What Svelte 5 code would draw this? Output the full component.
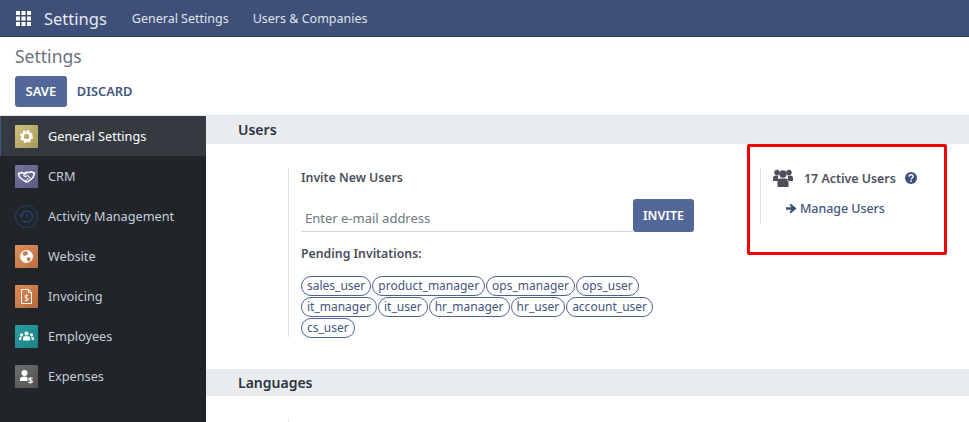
<script>
    const apps = [
        { name: 'General Settings', color: 'linear-gradient(135deg, #cdc07c, #a99b57)', icon: 'gear', active: true },
        { name: 'CRM', color: 'linear-gradient(135deg, #74749c, #5b5b84)', icon: 'shake' },
        { name: 'Activity Management', color: 'transparent', icon: 'clock' },
        { name: 'Website', color: 'linear-gradient(135deg, #e28f5c, #b96f42)', icon: 'globe' },
        { name: 'Invoicing', color: 'linear-gradient(135deg, #e08a55, #b46a3e)', icon: 'doc' },
        { name: 'Employees', color: 'linear-gradient(135deg, #2a9fa2, #1d8083)', icon: 'team' },
        { name: 'Expenses', color: 'linear-gradient(135deg, #6f6f6f, #515151)', icon: 'exp' }
    ];
    const pending = [
        'sales_user', 'product_manager', 'ops_manager', 'ops_user', 'it_manager',
        'it_user', 'hr_manager', 'hr_user', 'account_user', 'cs_user'
    ];
</script>

<div class="page">
    <header class="navbar">
        <svg class="apps" width="15" height="15" viewBox="0 0 15 15" fill="#fff">
            {#each [0, 5.5, 11] as y}
                {#each [0, 5.5, 11] as x}
                    <rect {x} {y} width="4" height="4" />
                {/each}
            {/each}
        </svg>
        <span class="brand">Settings</span>
        <a class="nav-link" href="#a">General Settings</a>
        <a class="nav-link" href="#b">Users &amp; Companies</a>
    </header>

    <div class="control-panel">
        <div class="crumb">Settings</div>
        <div class="buttons">
            <button class="btn primary">SAVE</button>
            <button class="btn link">DISCARD</button>
        </div>
    </div>

    <div class="main">
        <aside class="sidebar">
            {#each apps as app}
                <div class="app" class:active={app.active}>
                    <span class="app-icon" class:round={app.icon === 'clock'} style="background: {app.color}">
                        <svg width="23" height="23" viewBox="0 0 23 23">
                            {#if app.icon === 'gear'}
                                <circle cx="11.5" cy="11.5" r="4" fill="none" stroke="#fff" stroke-width="2.6" />
                                <circle cx="11.5" cy="11.5" r="5.6" fill="none" stroke="#fff" stroke-width="1.8" stroke-dasharray="2.4 2" />
                            {:else if app.icon === 'shake'}
                                <path d="M3.500 8.500l3.500-1 1.500 1 3-1.200 3 .2 1.500-.8 3.500 1.300-1.500 4.500-4.500 4-2.500.5-3-2-3.500-3z" fill="none" stroke="#fff" stroke-width="1.500" stroke-linejoin="round" />
                                <path d="M11.500 8.300l-2.800 2.200 1.500 1.200 2.300-1.100 3 2.700M10 15l1.500 1M12 13.500l1.500 1.300" fill="none" stroke="#fff" stroke-width="1.100" />
                            {:else if app.icon === 'clock'}
                                <circle cx="11.5" cy="11.5" r="11" fill="none" stroke="#24406f" stroke-width="1" />
                                <path d="M6.500 11.500a5.500 5.500 0 1 1 1.600 3.900" fill="none" stroke="#24406f" stroke-width="1.500" />
                                <path d="M4.800 10.500h3.400l-1.700 2.400zM11.500 8.500v3.400l2.400 1.200" fill="#24406f" stroke="#24406f" stroke-width="1" />
                            {:else if app.icon === 'globe'}
                                <circle cx="11.5" cy="11.5" r="6.5" fill="#fff" />
                                <path d="M8 7l4-1 1 3-3 2-2-1zM12 12l4 1-2 4-2-2z" fill="#c67a4c" />
                            {:else if app.icon === 'doc'}
                                <path d="M6.500 4.500h7l3 3v11h-10z" fill="none" stroke="#fff" stroke-width="1" />
                                <path d="M13.500 4.500v3h3" fill="none" stroke="#fff" stroke-width="1" />
                                <text x="11.5" y="16" class="glyph" font-size="8">$</text>
                            {:else if app.icon === 'team'}
                                <g fill="#fff">
                                    <circle cx="11.5" cy="8.500" r="2.100" />
                                    <circle cx="6.500" cy="9.800" r="1.600" />
                                    <circle cx="16.500" cy="9.800" r="1.600" />
                                    <path d="M8 15.500v-2.500q0-2 3.500-2t3.500 2v2.500zM4 15v-2q0-1.400 3-1.600-.6.6-.6 1.800V15zM19 15v-2q0-1.400-3-1.600.6.6.6 1.800V15z" />
                                </g>
                            {:else}
                                <circle cx="9.500" cy="8" r="3" fill="#fff" />
                                <path d="M5 16v-2q0-2.500 4.500-2.500 2 0 3 .7V16z" fill="#fff" />
                                <text x="15.500" y="18.500" class="glyph bold" font-size="9.500">$</text>
                            {/if}
                        </svg>
                    </span>
                    <span class="app-name">{app.name}</span>
                </div>
            {/each}
        </aside>

        <section class="content">
            <h2 class="section-title">Users</h2>
            <div class="settings-row">
                <div class="invite-box">
                    <div class="label">Invite New Users</div>
                    <div class="invite-form">
                        <input class="email" placeholder="Enter e-mail address" />
                        <button class="btn primary invite">INVITE</button>
                    </div>
                    <div class="label pending-label">Pending Invitations:</div>
                    <div class="chips">
                        {#each pending as user}
                            <span class="chip">{user}</span>
                        {/each}
                    </div>
                </div>

                <div class="active-box">
                    <div class="active-line">
                        <svg class="users" width="20" height="18" viewBox="0 0 20 18" fill="#4b505b">
                            <circle cx="4" cy="3.500" r="2.700" />
                            <circle cx="16" cy="3.500" r="2.700" />
                            <circle cx="10" cy="5" r="3.700" />
                            <path d="M0 12V9q0-2.500 3-2.500h2.500q-.5 1-.5 2.500t1 3zM20 12V9q0-2.500-3-2.500h-2.500q.5 1 .5 2.500t-1 3zM4.500 18v-5q0-3.500 3-3.500h5q3 0 3 3.500v5z" />
                        </svg>
                        <span class="active-count">17 Active Users</span>
                        <svg class="help" width="12" height="12" viewBox="0 0 13 13">
                            <circle cx="6.500" cy="6.500" r="6.500" fill="#3d4f80" />
                            <path d="M4.300 5q.2-2 2.300-2t2.200 1.800q0 1-1.100 1.700-.9.500-.9 1.300" fill="none" stroke="#fff" stroke-width="1.500" />
                            <rect x="5.700" y="9" width="1.700" height="1.700" fill="#fff" />
                        </svg>
                    </div>
                    <a class="manage" href="#m">
                        <svg width="11" height="11" viewBox="0 0 11 11" fill="#3f5078">
                            <path d="M0 4.200h5.500L3.500 2.100 4.900.700 10.500 5.500 4.900 10.300 3.500 8.900l2-2.100H0z" />
                        </svg>
                        Manage Users
                    </a>
                </div>
            </div>

            <h2 class="section-title languages">Languages</h2>
            <div class="settings-row stub"><div class="stub-line"></div></div>
        </section>
    </div>

    <div class="highlight"></div>
</div>

<style>
    :global(body) {
        margin: 0;
        overflow: hidden;
        background: #fff;
    }
    .page {
        position: relative;
        width: 969px;
        height: 422px;
        overflow: hidden;
        font-family: "Noto Sans", "Open Sans", sans-serif;
        font-size: 12.700px;
        color: #4c4c4c;
        display: flex;
        flex-direction: column;
    }
    .navbar {
        height: 36px;
        flex: none;
        background: #3f5078;
        border-bottom: 1px solid #2c3854;
        display: flex;
        align-items: center;
        padding-left: 16px;
        color: #fff;
    }
    .apps {
        margin-right: 13px;
    }
    .brand {
        font-size: 16.500px;
        margin-right: 25px;
        color: #e6e9f0;
    }
    .nav-link {
        color: #dfe3ec;
        text-decoration: none;
        font-size: 12.500px;
        margin-right: 24px;
    }
    .control-panel {
        height: 79px;
        flex: none;
        box-sizing: border-box;
        padding: 8px 15px 0;
        border-bottom: 1px solid #dee2e6;
    }
    .crumb {
        font-size: 17.500px;
        line-height: 22px;
        color: #6b7280;
        margin-bottom: 9px;
    }
    .buttons {
        display: flex;
        align-items: center;
    }
    .btn {
        font-family: inherit;
        font-size: 13px;
        font-weight: 600;
        border: none;
        border-radius: 3px;
        padding: 0 10.500px 2px;
        height: 31px;
        cursor: pointer;
    }
    .primary {
        background: #536898;
        color: #fff;
    }
    .link {
        background: none;
        color: #44567f;
        padding-left: 10px;
        font-size: 12.800px;
    }
    .main {
        flex: 1;
        display: flex;
        min-height: 0;
    }
    .sidebar {
        width: 206px;
        flex: none;
        background: #212529;
    }
    .app {
        height: 40px;
        display: flex;
        align-items: center;
        padding-left: 15px;
        color: #c4cdd9;
    }
    .app.active {
        background: #343a40;
        color: #fff;
        box-shadow: inset 1px 0 0 #44567f;
    }
    .app-icon {
        width: 23px;
        height: 23px;
        border-radius: 1px;
        margin-right: 10px;
        flex: none;
        display: block;
    }
    .app-icon.round {
        border-radius: 50%;
    }
    .app-icon svg {
        display: block;
    }
    .glyph {
        fill: #fff;
        text-anchor: middle;
        font-family: "Noto Sans", sans-serif;
    }
    .bold {
        font-weight: 700;
    }
    .content {
        flex: 1;
        min-width: 0;
    }
    .section-title {
        margin: 0;
        height: 28px;
        line-height: 28px;
        background: #e9ecef;
        padding-left: 32px;
        font-size: 14px;
        font-weight: 600;
        color: #2d3340;
    }
    .settings-row {
        display: flex;
        align-items: flex-start;
        padding: 24px 0 0 82px;
        height: 225px;
        box-sizing: border-box;
    }
    .invite-box {
        width: 393px;
        height: 169px;
        border-left: 1px solid #dee2e6;
        padding-left: 12px;
        flex: none;
    }
    .label {
        font-size: 12.300px;
        font-weight: 600;
        line-height: 18px;
        color: #4b505b;
        padding-top: 1px;
    }
    .invite-form {
        display: flex;
        align-items: flex-end;
        margin-top: 12px;
    }
    .email {
        flex: none;
        width: 332px;
        height: 31px;
        box-sizing: border-box;
        border: none;
        border-bottom: 1px solid #ced4da;
        outline: none;
        font-family: inherit;
        font-size: 13px;
        padding: 4px 4px 0;
        color: #6b7280;
    }
    .email::placeholder {
        color: #6f7782;
        opacity: 1;
    }
    .invite {
        width: 61px;
        padding: 0;
        height: 33px;
        font-size: 12.500px;
    }
    .pending-label {
        margin-top: 12px;
    }
    .chips {
        display: flex;
        flex-wrap: wrap;
        gap: 1px;
        margin-top: 13px;
        width: 393px;
    }
    .chip {
        height: 20px;
        line-height: 18px;
        box-sizing: border-box;
        border: 1px solid #4e6296;
        border-radius: 10px;
        padding: 0 5px;
        font-size: 12px;
        color: #44567f;
    }
    .active-box {
        margin-left: 66px;
        width: 170px;
        height: 56px;
        border-left: 1px solid #dee2e6;
        padding-left: 12px;
        flex: none;
    }
    .active-line {
        display: flex;
        align-items: center;
        height: 20px;
    }
    .users {
        margin-right: 11px;
    }
    .active-count {
        font-size: 12.400px;
        font-weight: 600;
        color: #4b505b;
        margin-right: 9px;
    }
    .manage {
        display: flex;
        align-items: center;
        gap: 3px;
        margin: 12px 0 0 13px;
        color: #44567f;
        font-size: 12.400px;
        font-weight: 500;
        text-decoration: none;
    }
    .languages {
        height: 27px;
    }
    .settings-row.stub {
        height: 26px;
    }
    .stub-line {
        width: 1px;
        height: 10px;
        background: #dee2e6;
    }
    .highlight {
        position: absolute;
        left: 747px;
        top: 144px;
        width: 200px;
        height: 111px;
        box-sizing: border-box;
        border: 3px solid #f40009;
        border-radius: 2px;
    }
</style>
